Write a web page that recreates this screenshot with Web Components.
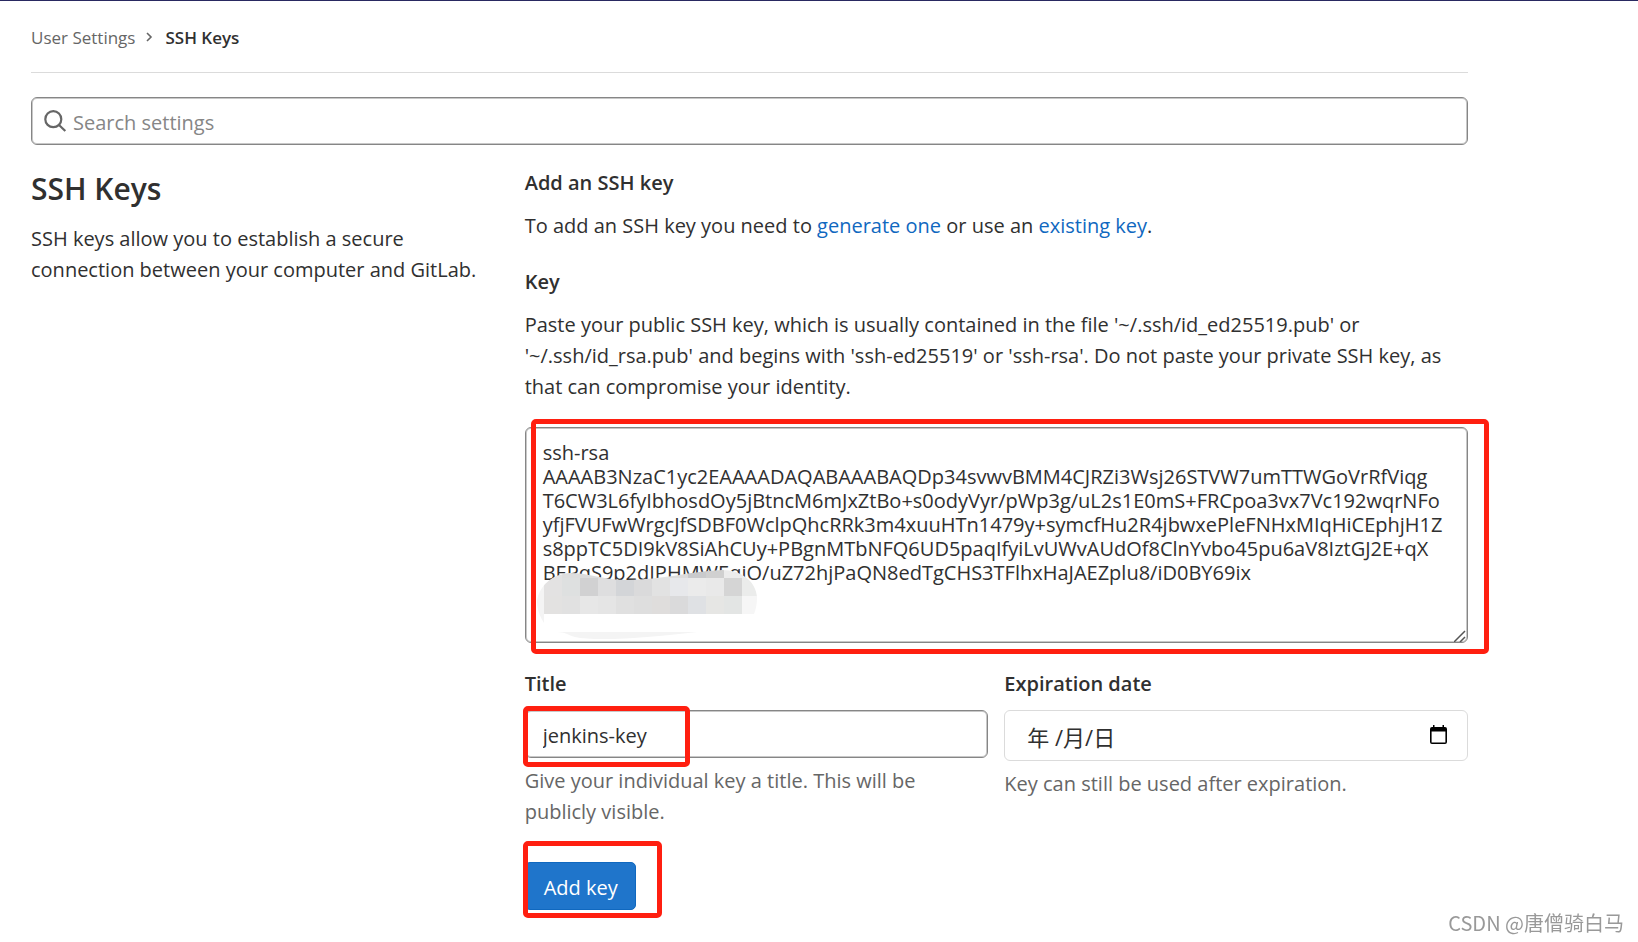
<!DOCTYPE html>
<html lang="en">
<head>
<meta charset="utf-8">
<title>SSH Keys · User Settings</title>
<style>
  :root {
    --text: #303030;
    --muted: #666;
    --link: #1068bf;
    --border: #868686;
    --mark: #ff1f10;
  }
  body {
    margin: 0;
    background: #fff;
    color: var(--text);
    font: 20px/31px "Open Sans", "Noto Sans", "Noto Sans CJK SC", sans-serif;
  }
</style>
</head>
<body>
<settings-page></settings-page>

<script>
const define = (name, html, setup) => {
  const template = document.createElement('template');
  template.innerHTML = html;
  customElements.define(name, class extends HTMLElement {
    constructor() {
      super();
      this.attachShadow({ mode: 'open' }).append(template.content.cloneNode(true));
      if (setup) setup(this, this.shadowRoot);
    }
  });
};

define('bread-crumbs', `
  <style>
    :host { display: block; border-bottom: 1px solid #dbdbdb; font-size: 17px; line-height: 24px; }
    nav { display: flex; align-items: center; padding: 25px 0 22px; }
    a { color: var(--muted); text-decoration: none; }
    a[aria-current] { color: var(--text); font-weight: 600; }
    svg { width: 8px; height: 12px; margin: 0 12px 0 10px; }
  </style>
  <nav aria-label="Breadcrumb">
    <a href="#profile">User Settings</a>
    <svg viewBox="0 0 8 12" fill="none" stroke="#666" stroke-width="1.6" aria-hidden="true"><path d="M2 1l4 4-4 4"/></svg>
    <a href="#keys" aria-current="page">SSH Keys</a>
  </nav>`);

define('search-box', `
  <style>
    :host { display: block; }
    label { display: flex; align-items: center; gap: 6px; height: 48px; box-sizing: border-box;
      padding: 0 12px; border: 1px solid var(--border); border-radius: 6px; box-shadow: inset 0 0 0 1px #c8c8c8; }
    svg { width: 23px; height: 23px; flex: none; }
    input { flex: 1; min-width: 0; border: 0; padding: 2px 0 0; outline: 0; background: none; font: inherit; color: inherit; }
    input::placeholder { color: var(--border); opacity: 1; }
  </style>
  <label>
    <svg viewBox="0 0 23 23" fill="none" stroke="#666" stroke-width="2.2" aria-hidden="true"><circle cx="9.3" cy="9.2" r="8"/><path d="M15 15l6.3 6"/></svg>
    <input type="text" placeholder="Search settings" aria-label="Search settings">
  </label>`);

define('mark-frame', `
  <style>
    :host { position: absolute; box-sizing: border-box; border: 5px solid var(--mark); border-radius: 5px; pointer-events: none; }
  </style>`);

define('pixel-mask', `
  <style>
    :host { position: absolute; pointer-events: none; }
    svg { display: block; width: 220px; height: 70px; }
  </style>
  <svg viewBox="0 0 220 70" aria-hidden="true">
    <defs><clipPath id="blob"><path d="M0 31C2 17 14 4 33 3C52 3 66 10 90 10C125 10 155 1 185 0C205 0 219 12 220 27C220 34 219 39 217 44L205 44V44H7V53C2 45 0 38 0 31Z"/></clipPath></defs>
    <g id="tiles" clip-path="url(#blob)"></g>
    <path d="M20 62H160C120 67 60 72 38 67C31 65 28 62 20 62Z" fill="#f4f4f4"/>
  </svg>`, (host, root) => {
  const g = root.getElementById('tiles');
  const rect = (x, y, w, h, fill) => {
    const r = document.createElementNS('http://www.w3.org/2000/svg', 'rect');
    for (const [k, v] of Object.entries({ x, y, width: w, height: h, fill, 'shape-rendering': 'crispEdges' })) r.setAttribute(k, v);
    g.append(r);
  };
  const rows = [
    [-10, 18, ['#f4f4f4','#e3e3e3','#dedede','#dcdcdc','#dcdcdc','#dfdfdf','#e4e4e4','#e2e4e4','#dcdcdc','#c9cacc','#d0d0d0','#ececec','#eee']],
    [8, 18, ['#f4f4f4','#e3e2e2','#dee0e0','#d1d1d2','#dededf','#d3d5d8','#dadadb','#e2e2e2','#e7e8eb','#ebebeb','#e9e9e9','#d5d5d5','#ebeceb']],
    [26, 18, ['#f4f4f4','#e3e2e1','#e1e1e1','#e7e7e7','#e5e5e5','#e0e0e0','#dedede','#dfdddc','#dadadb','#dfe1e4','#e6e6e4','#e3e5e4','#f6f6f6']],
    [44, 18, ['#f4f4f4']]
  ];
  for (const [y, h, fills] of rows) fills.forEach((f, i) => rect(i ? 7 + (i - 1) * 18 : -11, y, 18, h, f));
});

define('add-key-form', `
  <style>
    :host { display: block; }
    h2, p { margin: 0; font-size: inherit; }
    h2, label { display: block; font-weight: 600; }
    a { color: var(--link); text-decoration: none; }
    p { margin-top: 12px; }
    .key { margin-top: 25px; }
    .area { position: relative; margin-top: 25px; }
    textarea, input { display: block; width: 100%; box-sizing: border-box; font: inherit; color: inherit; background: #fff;
      border: 1px solid var(--border); border-radius: 6px; outline: 0; box-shadow: inset 0 0 0 1px #c8c8c8; }
    textarea { height: 216px; padding: 13px 17px; line-height: 24px; white-space: pre; overflow: hidden; resize: vertical; }
    textarea::-webkit-resizer { background: none; }
    .grip { position: absolute; right: 2px; bottom: 1px; width: 12px; height: 12px; pointer-events: none; }
    .fields { display: grid; grid-template-columns: 1fr 1fr; gap: 16px; margin-top: 25px; }
    .box { position: relative; margin-top: 11px; }
    input { height: 48px; padding: 2px 17px 0; }
    .date input { height: 51px; padding: 0 22px; border-color: #dbdbdb; box-shadow: none; font-size: 22px; }
    .fields p { margin-top: 7px; color: var(--muted); }
    .pick { position: absolute; right: 21px; top: 15px; width: 17px; height: 20px; padding: 0; border: 0; background: none; }
    .pick svg { display: block; width: 17px; height: 20px; }
    .submit { position: relative; width: fit-content; margin-top: 35px; }
    .submit button { display: block; height: 48px; padding: 2px 17px 0 18px; border: 1px solid #1068bf; border-radius: 5px;
      background: #1f75cb; color: #fff; font: inherit; }
    pixel-mask { left: 12px; bottom: 3px; }
    .area mark-frame { inset: -8px -21px -11px 6px; }
    .box mark-frame { left: -2px; top: -4px; bottom: -9px; width: 167px; }
    .submit mark-frame { inset: -21px -26px -8px -2px; }
  </style>
  <form>
    <h2>Add an SSH key</h2>
    <p>To add an SSH key you need to <a href="#generate">generate one</a> or use an <a href="#existing">existing key</a>.</p>
    <label class="key" for="key">Key</label>
    <p>Paste your public SSH key, which is usually contained in the file '~/.ssh/id_ed25519.pub' or '~/.ssh/id_rsa.pub' and begins with 'ssh-ed25519' or 'ssh-rsa'. Do not paste your private SSH key, as that can compromise your identity.</p>
    <div class="area">
      <textarea id="key" spellcheck="false">ssh-rsa
AAAAB3NzaC1yc2EAAAADAQABAAABAQDp34svwvBMM4CJRZi3Wsj26STVW7umTTWGoVrRfViqg
T6CW3L6fyIbhosdOy5jBtncM6mJxZtBo+s0odyVyr/pWp3g/uL2s1E0mS+FRCpoa3vx7Vc192wqrNFo
yfjFVUFwWrgcJfSDBF0WclpQhcRRk3m4xuuHTn1479y+symcfHu2R4jbwxePleFNHxMIqHiCEphjH1Z
s8ppTC5DI9kV8SiAhCUy+PBgnMTbNFQ6UD5paqIfyiLvUWvAUdOf8ClnYvbo45pu6aV8IztGJ2E+qX
BEPqS9p2dIPHMWEqiO/uZ72hjPaQN8edTgCHS3TFlhxHaJAEZplu8/iD0BY69ix</textarea>
      <svg class="grip" viewBox="0 0 12 12" fill="none" stroke="#555" stroke-width="1.5" aria-hidden="true"><path d="M0 12L11 1M6 12l5-5"/></svg>
      <pixel-mask></pixel-mask>
      <mark-frame></mark-frame>
    </div>
    <div class="fields">
      <div>
        <label for="title">Title</label>
        <div class="box"><input id="title" type="text" value="jenkins-key"><mark-frame></mark-frame></div>
        <p>Give your individual key a title. This will be publicly visible.</p>
      </div>
      <div class="date">
        <label for="expires">Expiration date</label>
        <div class="box">
          <input id="expires" type="text" value="年 /月/日">
          <button class="pick" type="button" aria-label="Choose a date">
            <svg viewBox="0 0 17 20" aria-hidden="true"><path fill="#000" fill-rule="evenodd" d="M3 0h1.5v2h8V0H14v2h1a2 2 0 0 1 2 2v13a2 2 0 0 1-2 2H2a2 2 0 0 1-2-2V4a2 2 0 0 1 2-2h1zM1.6 6.5v10.9h13.8V6.5z"/></svg>
          </button>
        </div>
        <p>Key can still be used after expiration.</p>
      </div>
    </div>
    <div class="submit"><button type="button">Add key</button><mark-frame></mark-frame></div>
  </form>`);

define('settings-page', `
  <style>
    :host { display: block; border-top: 1px solid #292961; }
    main { margin: 0 170px 0 31px; padding-bottom: 24px; }
    search-box { margin-top: 24px; }
    .columns { display: grid; grid-template-columns: 1fr 2fr; gap: 22px; margin-top: 22px; }
    h1 { margin: 0; font-size: 30px; line-height: 44px; font-weight: 600; }
    p { margin: 12px 0 0; }
    footer { position: fixed; right: 14px; bottom: 4px; color: #999; font: 20px/31px "Noto Sans CJK SC", sans-serif; }
  </style>
  <main>
    <bread-crumbs></bread-crumbs>
    <search-box></search-box>
    <div class="columns">
      <section>
        <h1>SSH Keys</h1>
        <p>SSH keys allow you to establish a secure connection between your computer and GitLab.</p>
      </section>
      <add-key-form></add-key-form>
    </div>
  </main>
  <footer>CSDN @唐僧骑白马</footer>`);
</script>
</body>
</html>
